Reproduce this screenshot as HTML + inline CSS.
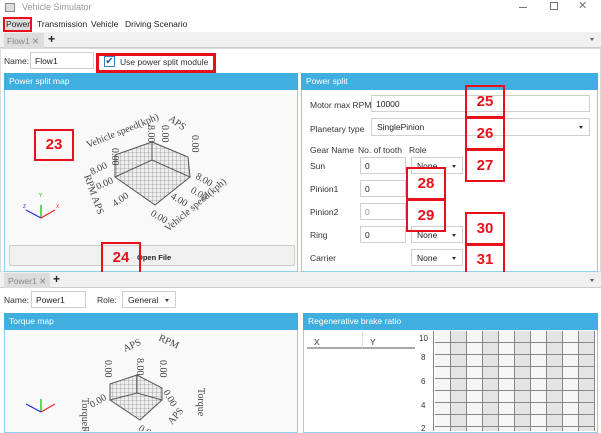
<!DOCTYPE html>
<html><head><meta charset="utf-8"><style>
*{box-sizing:border-box;margin:0;padding:0}
body{width:601px;height:431px;overflow:hidden;background:#fff;font-family:"Liberation Sans",sans-serif;font-size:8.5px;color:#222;position:relative}
.a{position:absolute}
.inp{position:absolute;border:1px solid #d0d0d0;background:#fff;padding:3px 4px;font-size:8.5px;height:17px}
.hdr{position:absolute;background:#41aee0;color:#fff;font-size:8.5px;padding:3px 5px;height:17px}
.pan{position:absolute;border:1px solid #8fd0ee;background:#fff}
.red{position:absolute;border:2px solid #e8101a;color:#e8101a;font-weight:bold;font-size:15px;text-align:center}
.cmb{position:absolute;border:1px solid #d0d0d0;background:#fff;padding:3px 5px;font-size:8.5px;height:17px}
.cmb:after{content:"";position:absolute;right:6px;top:7px;border:2.5px solid transparent;border-top:3px solid #333}
.lbl{position:absolute;font-size:8.5px;color:#333}
</style></head><body>
<!-- title -->
<div class="a" style="left:5px;top:3px;width:10px;height:9px;border:1px solid #888;background:#ddd"></div>
<div class="a" style="left:22px;top:2px;font-size:9px;color:#999">Vehicle Simulator</div>
<div class="a" style="left:519px;top:7px;width:8px;border-top:1px solid #777"></div>
<div class="a" style="left:550px;top:2px;width:8px;height:8px;border:1px solid #777"></div>
<div class="a" style="left:578px;top:-1px;font-size:11px;color:#777">✕</div>
<!-- menu -->
<div class="a" style="left:0;top:16px;width:601px;height:16px;background:#fff"></div>
<div class="a" style="left:3px;top:17px;width:29px;height:15px;border:2px solid #e8101a;background:#ddd"></div>
<div class="a" style="left:6px;top:19px;font-size:8.5px">Power</div>
<div class="a" style="left:37px;top:19px;font-size:8.5px">Transmission</div>
<div class="a" style="left:91px;top:19px;font-size:8.5px">Vehicle</div>
<div class="a" style="left:125px;top:19px;font-size:8.5px">Driving Scenario</div>
<!-- tab strip 1 -->
<div class="a" style="left:0;top:32px;width:601px;height:16px;background:#f0f0f0;border-bottom:1px solid #ccc"></div>
<div class="a" style="left:4px;top:33px;width:40px;height:15px;background:#dcdcdc"></div>
<div class="a" style="left:7px;top:36px;color:#888">Flow1 ✕</div>
<div class="a" style="left:48px;top:32px;font-size:12px;font-weight:bold">+</div>
<div class="a" style="left:590px;top:38px;border:2.5px solid transparent;border-top:3px solid #555"></div>
<div class="a" style="left:0;top:48px;width:601px;height:224px;background:#fff;border:1px solid #ddd"></div>
<div class="lbl" style="left:4px;top:56px">Name:</div>
<div class="inp" style="left:30px;top:52px;width:64px">Flow1</div>
<div class="a" style="left:96px;top:53px;width:120px;height:20px;border:3px solid #e8101a;background:#fff"></div>
<div class="a" style="left:104px;top:56px;width:11px;height:11px;border:1px solid #3a7cc4;color:#2060b0;font-size:10px;line-height:9px;text-align:center">✔</div>
<div class="lbl" style="left:120px;top:57px">Use power split module</div>
<!-- power split map -->
<div class="pan" style="left:4px;top:73px;width:294px;height:199px;background:#f9f9f9"></div>
<div class="hdr" style="left:4px;top:73px;width:294px">Power split map</div>
<svg class="a" style="left:4px;top:90px" width="293" height="155" viewBox="4 90 293 155" font-family="Liberation Serif,serif" font-size="10" fill="#444">
<defs><pattern id="g" width="4" height="4" patternUnits="userSpaceOnUse"><rect width="4" height="4" fill="#eee"/><path d="M0 0H4M0 0V4" stroke="#777" stroke-width=".6"/></pattern></defs>
<polygon points="115,155 152,142 152,180 115,177" fill="url(#g)" stroke="#555"/>
<polygon points="152,142 188,157 190,177 152,180" fill="url(#g)" stroke="#555"/>
<polygon points="115,177 152,160 190,177 155,205" fill="url(#g)" stroke="#555"/>
<text x="88" y="148" transform="rotate(-22 88 148)">Vehicle speed(kph)</text>
<text x="168" y="120" transform="rotate(35 168 120)">APS</text>
<text x="112" y="148" transform="rotate(90 112 148)">0.00</text>
<text x="148" y="125" transform="rotate(90 148 125)">8.00</text>
<text x="162" y="125" transform="rotate(90 162 125)">0.00</text>
<text x="192" y="135" transform="rotate(90 192 135)">0.00</text>
<text x="92" y="175" transform="rotate(-25 92 175)">8.00</text>
<text x="98" y="190" transform="rotate(-25 98 190)">0.00</text>
<text x="115" y="207" transform="rotate(-35 115 207)">4.00</text>
<text x="195" y="178" transform="rotate(30 195 178)">8.00</text>
<text x="190" y="192" transform="rotate(30 190 192)">0.00</text>
<text x="170" y="198" transform="rotate(30 170 198)">4.00</text>
<text x="150" y="215" transform="rotate(30 150 215)">0.00</text>
<text x="168" y="232" transform="rotate(-40 168 232)">Vehicle speed(kph)</text>
<text x="84" y="176" transform="rotate(70 84 176)">RPM APS</text>
<path d="M41 218 V205" stroke="#0b0" stroke-width="1.2"/><path d="M41 218 L26 210" stroke="#22e" stroke-width="1.2"/><path d="M41 218 L55 210" stroke="#e22" stroke-width="1.2"/>
<text x="39" y="197" font-size="5" fill="#0b0" font-family="Liberation Sans">Y</text><text x="23" y="208" font-size="5" fill="#22e" font-family="Liberation Sans">Z</text><text x="56" y="208" font-size="5" fill="#e22" font-family="Liberation Sans">X</text>
</svg>
<div class="a" style="left:9px;top:245px;width:286px;height:21px;border:1px solid #ccc;background:#f0f0f0;border-radius:2px"></div>
<div class="a" style="left:137px;top:253px;font-size:7.5px;font-weight:bold">Open File</div>
<!-- power split -->
<div class="pan" style="left:301px;top:73px;width:297px;height:199px"></div>
<div class="hdr" style="left:301px;top:73px;width:297px">Power split</div>
<div class="lbl" style="left:310px;top:100px">Motor max RPM</div>
<div class="inp" style="left:371px;top:95px;width:219px">10000</div>
<div class="lbl" style="left:310px;top:124px">Planetary type</div>
<div class="cmb" style="left:371px;top:118px;width:219px;height:18px">SinglePinion</div>
<div class="lbl" style="left:310px;top:145px">Gear Name</div>
<div class="lbl" style="left:358px;top:145px">No. of tooth</div>
<div class="lbl" style="left:409px;top:145px">Role</div>
<div class="lbl" style="left:310px;top:161px">Sun</div>
<div class="inp" style="left:360px;top:157px;width:46px">0</div>
<div class="cmb" style="left:411px;top:157px;width:52px">None</div>
<div class="lbl" style="left:310px;top:184px">Pinion1</div>
<div class="inp" style="left:360px;top:180px;width:46px">0</div>
<div class="lbl" style="left:310px;top:207px">Pinion2</div>
<div class="inp" style="left:360px;top:203px;width:46px;color:#999">0</div>
<div class="lbl" style="left:310px;top:230px">Ring</div>
<div class="inp" style="left:360px;top:226px;width:46px">0</div>
<div class="cmb" style="left:411px;top:226px;width:52px">None</div>
<div class="lbl" style="left:310px;top:253px">Carrier</div>
<div class="cmb" style="left:411px;top:249px;width:52px">None</div>
<div class="red" style="left:34px;top:129px;width:40px;height:32px;line-height:28px">23</div>
<div class="red" style="left:101px;top:242px;width:40px;height:32px;line-height:28px;background:transparent">24</div>
<div class="red" style="left:465px;top:85px;width:40px;height:33px;line-height:29px">25</div>
<div class="red" style="left:465px;top:117px;width:40px;height:33px;line-height:29px">26</div>
<div class="red" style="left:465px;top:149px;width:40px;height:33px;line-height:29px">27</div>
<div class="red" style="left:406px;top:167px;width:40px;height:33px;line-height:29px">28</div>
<div class="red" style="left:406px;top:199px;width:40px;height:33px;line-height:29px">29</div>
<div class="red" style="left:465px;top:212px;width:40px;height:33px;line-height:29px">30</div>
<div class="red" style="left:465px;top:244px;width:40px;height:32px;line-height:28px">31</div>
<!-- tab strip 2 -->
<div class="a" style="left:0;top:272px;width:601px;height:16px;background:#f0f0f0;border-bottom:1px solid #ccc"></div>
<div class="a" style="left:4px;top:273px;width:46px;height:15px;background:#dcdcdc"></div>
<div class="a" style="left:8px;top:276px;color:#888">Power1 ✕</div>
<div class="a" style="left:53px;top:272px;font-size:12px;font-weight:bold">+</div>
<div class="a" style="left:590px;top:279px;border:2.5px solid transparent;border-top:3px solid #555"></div>
<div class="lbl" style="left:4px;top:295px">Name:</div>
<div class="inp" style="left:31px;top:291px;width:55px">Power1</div>
<div class="lbl" style="left:97px;top:295px">Role:</div>
<div class="cmb" style="left:122px;top:291px;width:54px">General</div>
<!-- torque map -->
<div class="pan" style="left:4px;top:313px;width:294px;height:120px;background:#f9f9f9"></div>
<div class="hdr" style="left:4px;top:313px;width:294px">Torque map</div>
<svg class="a" style="left:4px;top:330px" width="293" height="101" viewBox="4 330 293 101" font-family="Liberation Serif,serif" font-size="10" fill="#444">
<polygon points="110,384 137,375 137,405 110,400" fill="url(#g)" stroke="#555"/>
<polygon points="137,375 162,388 162,400 137,405" fill="url(#g)" stroke="#555"/>
<polygon points="110,400 137,393 162,400 140,420" fill="url(#g)" stroke="#555"/>
<text x="125" y="352" transform="rotate(-25 125 352)">APS</text>
<text x="158" y="340" transform="rotate(25 158 340)">RPM</text>
<text x="105" y="360" transform="rotate(90 105 360)">0.00</text>
<text x="137" y="358" transform="rotate(90 137 358)">8.00</text>
<text x="160" y="360" transform="rotate(90 160 360)">0.00</text>
<text x="82" y="398" transform="rotate(90 82 398)">TorqueRPM</text>
<text x="198" y="388" transform="rotate(90 198 388)">Torque</text>
<text x="92" y="408" transform="rotate(-30 92 408)">0.00</text>
<text x="163" y="392" transform="rotate(60 163 392)">0.00</text>
<text x="138" y="430" transform="rotate(30 138 430)">0.00</text>
<text x="172" y="425" transform="rotate(-50 172 425)">APS</text>
<path d="M41 412 V399" stroke="#0b0" stroke-width="1.2"/><path d="M41 412 L26 404" stroke="#22e" stroke-width="1.2"/><path d="M41 412 L55 404" stroke="#e22" stroke-width="1.2"/>
</svg>
<!-- regen -->
<div class="pan" style="left:303px;top:313px;width:295px;height:120px"></div>
<div class="hdr" style="left:303px;top:313px;width:295px">Regenerative brake ratio</div>
<div class="a" style="left:307px;top:331px;width:108px;height:18px;border-bottom:2px solid #aaa"></div>
<div class="a" style="left:362px;top:331px;width:1px;height:17px;background:#ddd"></div>
<div class="lbl" style="left:314px;top:337px">X</div>
<div class="lbl" style="left:370px;top:337px">Y</div>
<div class="a" style="left:435px;top:331px;width:160px;height:100px;background:repeating-linear-gradient(90deg,#f6f6f6 0 16px,#e4e4e4 16px 32px)"></div>
<div class="a" style="left:435px;top:331px;width:160px;height:100px;background:repeating-linear-gradient(180deg,transparent 0 11px,#888 11px 12px),repeating-linear-gradient(90deg,transparent 0 15px,#888 15px 16px)"></div>
<div class="a" style="left:433px;top:331px;width:1px;height:100px;background:#888"></div>
<div class="lbl" style="left:419px;top:334px;font-size:8px">10</div>
<div class="lbl" style="left:421px;top:353px;font-size:8px">8</div>
<div class="lbl" style="left:421px;top:377px;font-size:8px">6</div>
<div class="lbl" style="left:421px;top:401px;font-size:8px">4</div>
<div class="lbl" style="left:421px;top:424px;font-size:8px">2</div>
</body></html>
